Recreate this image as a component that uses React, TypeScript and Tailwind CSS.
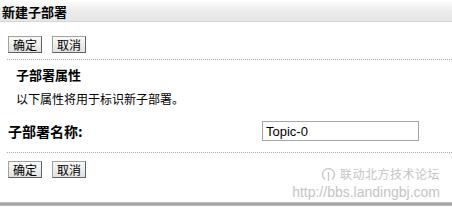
const cjk = '"Noto Sans CJK SC", "Liberation Sans", sans-serif'

function WinButton({ label }: { label: string }) {
  return (
    <button
      className="h-[17px] w-[34px] border border-t-[#a0a0a0] border-l-[#a0a0a0] border-b-[#606060] border-r-[#606060] bg-gradient-to-b from-[#fafafa] to-[#e2e2e2] text-[12px] leading-[15px] text-black"
      style={{ fontFamily: cjk }}
    >
      {label}
    </button>
  )
}

function ButtonRow() {
  return (
    <div className="flex gap-[10px] pl-[8px]">
      <WinButton label="确定" />
      <WinButton label="取消" />
    </div>
  )
}

function DottedRule() {
  return <div className="ml-[7px] border-t border-dotted border-[#a8a8a8]" />
}

export default function App() {
  return (
    <div
      className="relative h-[208px] w-[452px] overflow-hidden bg-white text-black"
      style={{ fontFamily: cjk }}
    >
      <header className="h-[22px] border-b border-[#d6d6d6] bg-gradient-to-b from-white via-[#ececec] to-[#e6e6e6] pl-[2px] pt-[2px] text-[13px] font-bold leading-[19px]">
        新建子部署
      </header>

      <div className="mt-[14px]">
        <ButtonRow />
      </div>

      <div className="mt-[6px]">
        <DottedRule />
      </div>

      <section className="pl-[16px] pt-[6px]">
        <h2 className="text-[13px] font-bold leading-[18px]">子部署属性</h2>
        <p className="mt-[6px] text-[12px] leading-[18px]">以下属性将用于标识新子部署。</p>
      </section>

      <div className="mt-[13px] flex items-center">
        <label className="w-[262px] pl-[8px] text-[14px] font-bold leading-[18px]">子部署名称:</label>
        <input
          className="h-[20px] w-[157px] border border-[#a5a5a5] px-[3px] text-[13px] text-black outline-none"
          style={{ fontFamily: '"Liberation Sans", Arial, sans-serif' }}
          defaultValue="Topic-0"
        />
      </div>

      <div className="mt-[11px]">
        <DottedRule />
      </div>

      <div className="mt-[8px]">
        <ButtonRow />
      </div>

      <div className="mt-[24px] h-[4px] bg-gradient-to-b from-[#c8c8c8] via-[#9c9c9c] to-[#c0c0c0]" />

      {/* watermark */}
      <div className="pointer-events-none absolute right-[12px] top-[166px] flex flex-col items-end text-[#c4c4c4]">
        <div className="flex items-center gap-[4px]">
          <svg width="15" height="15" viewBox="0 0 15 15" fill="none" stroke="#c8c8c8" strokeWidth="1.4">
            <path d="M4 12.5A6 6 0 1 1 11 12.5" />
            <path d="M7.5 5v9" />
          </svg>
          <span className="text-[12px] leading-[16px] tracking-[0.5px]">联动北方技术论坛</span>
        </div>
        <span
          className="mt-[2px] text-[14px] leading-[16px]"
          style={{ fontFamily: '"Liberation Sans", Arial, sans-serif' }}
        >
          http://bbs.landingbj.com
        </span>
      </div>
    </div>
  )
}
